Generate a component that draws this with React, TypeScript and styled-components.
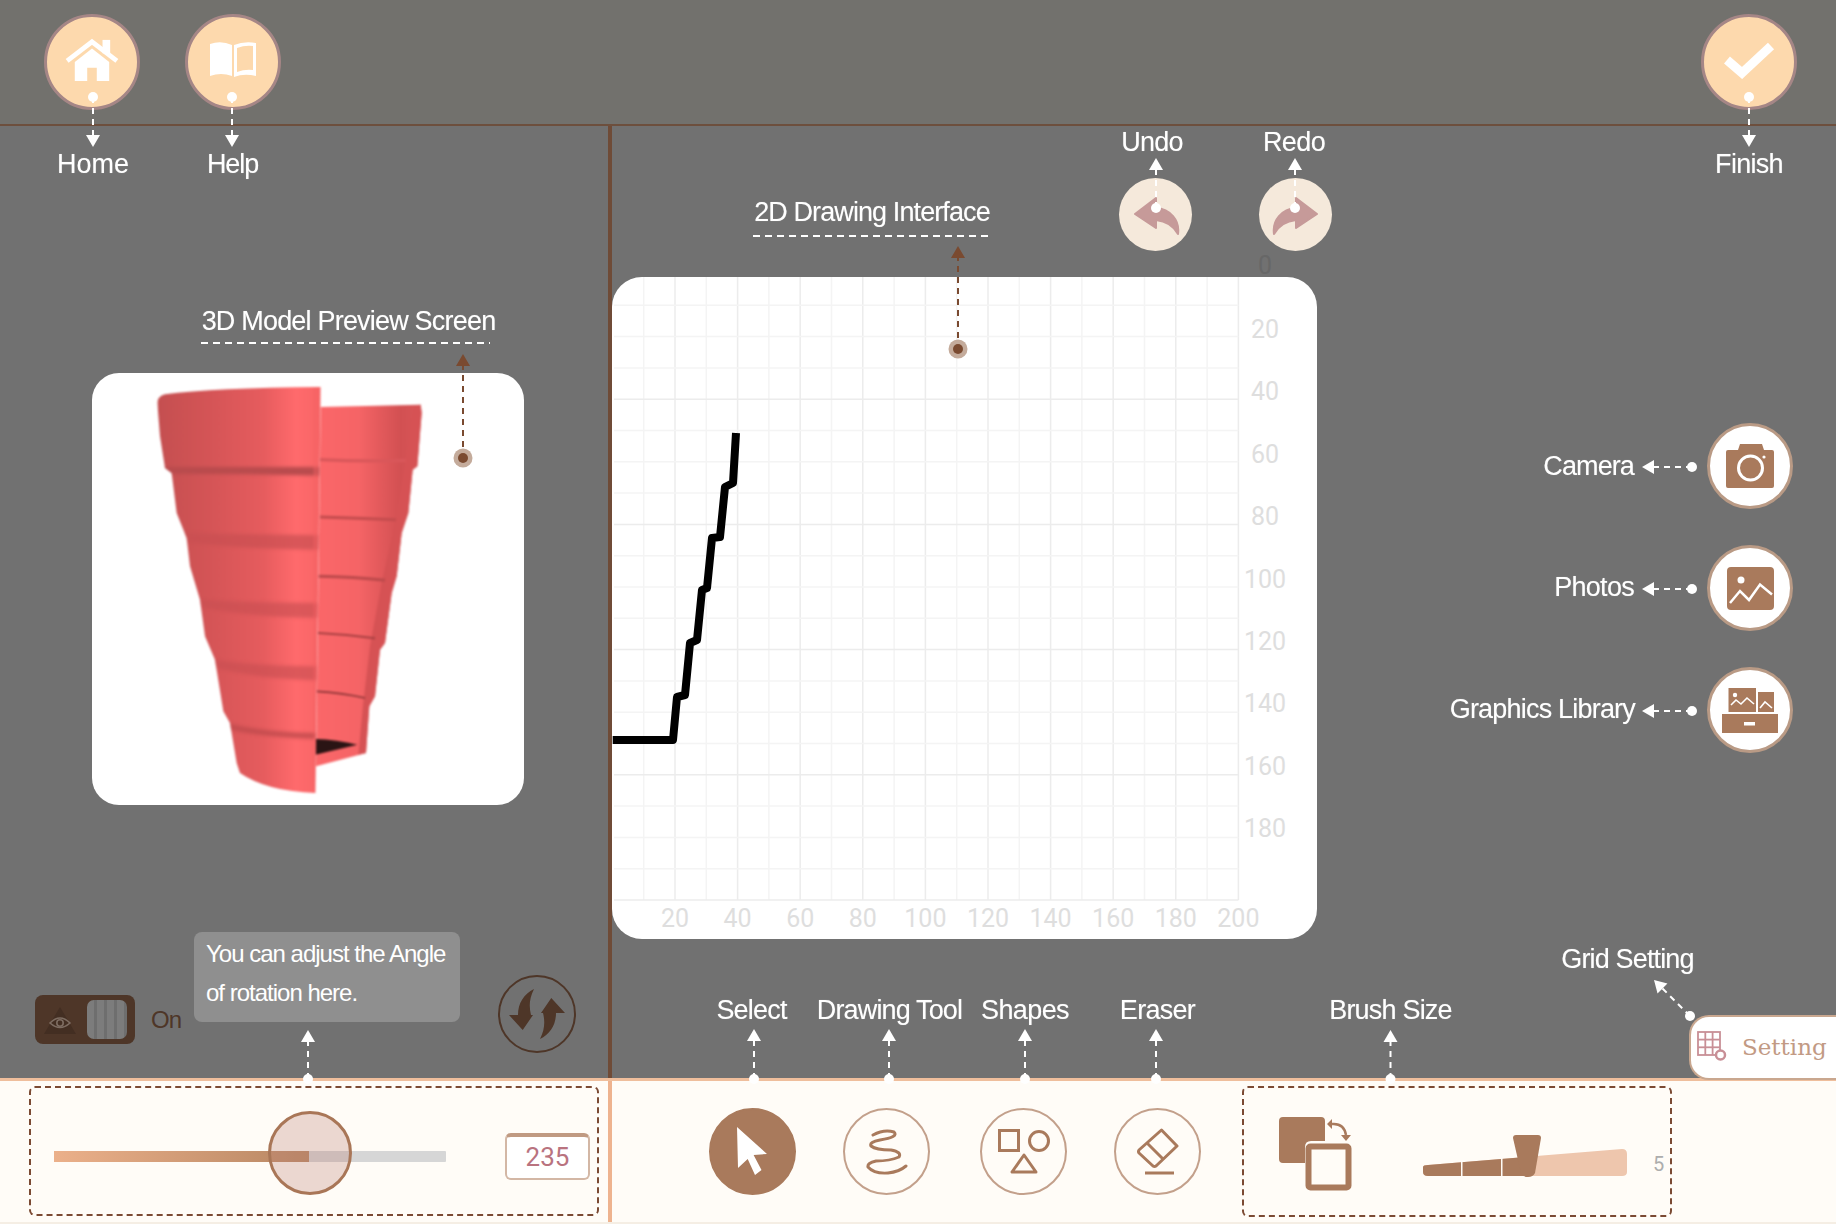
import React from "react";
import styled, { createGlobalStyle } from "styled-components";

const brown = "#a97a5c";
const dark = "#4e3628";
const bubbleIcon = "#c69a99";

const Global = createGlobalStyle`
  html, body { margin: 0; padding: 0; background: #717171; }
  body { width: 1836px; height: 1224px; overflow: hidden; font-family: "Liberation Sans", Arial, sans-serif; }
  * { box-sizing: border-box; }
`;

const Page = styled.div`
  position: relative;
  width: 1836px;
  height: 1224px;
  display: grid;
  grid-template-rows: 126px 952px 146px;
  overflow: hidden;
  background: #717171;
`;

const Header = styled.header`
  display: flex;
  align-items: flex-start;
  padding: 14px 39px 0 44px;
  gap: 45px;
  background: #72716d;
  border-bottom: 2px solid #6d4f3d;
`;

const HeaderButton = styled.div<{ $end?: boolean }>`
  width: 96px;
  height: 96px;
  border-radius: 50%;
  flex: none;
  display: flex;
  align-items: center;
  justify-content: center;
  padding-bottom: 4px;
  background: #fdd9ad;
  border: 3px solid #a58686;
  margin-left: ${(p) => (p.$end ? "auto" : "0")};
`;

const Main = styled.main`
  display: grid;
  grid-template-columns: 608px 4px 1fr;
  min-height: 0;
`;

const Divider = styled.div`
  background: #6f4b37;
`;

const LeftPanel = styled.section`
  display: flex;
  flex-direction: column;
  padding-top: 247px;
`;

const PreviewCard = styled.div`
  width: 432px;
  height: 432px;
  margin-left: 92px;
  border-radius: 27px;
  background: #fff;
  overflow: hidden;
`;

const ModelSvg = styled.svg`
  display: block;
  filter: blur(1px);
`;

const Controls = styled.div`
  margin-top: auto;
  display: flex;
  align-items: flex-end;
  padding: 0 0 25px 35px;
`;

const ToggleGroup = styled.div`
  display: flex;
  align-items: center;
  gap: 16px;
  margin-bottom: 9px;
`;

const Toggle = styled.div`
  width: 100px;
  height: 49px;
  border-radius: 8px;
  background: ${dark};
  display: flex;
  align-items: center;
  justify-content: space-between;
  padding: 0 8px 0 3px;
`;

const ToggleKnob = styled.div`
  width: 40px;
  height: 39px;
  border-radius: 7px;
  background: repeating-linear-gradient(90deg, #7c7c7c 0 7px, #6e6e6e 7px 10px);
`;

const OnText = styled.span`
  font-size: 24px;
  letter-spacing: -1px;
  color: ${dark};
  width: 28px;
`;

const Hint = styled.div`
  width: 266px;
  height: 90px;
  margin: 0 38px 31px 15px;
  padding: 2px 12px 0;
  border-radius: 8px;
  background: #8f8f8f;
  color: #fff;
  font-size: 24px;
  line-height: 39px;
  letter-spacing: -1px;
`;

const RefreshButton = styled.div`
  width: 78px;
  height: 78px;
  border-radius: 50%;
  border: 2px solid ${dark};
  display: flex;
  align-items: center;
  justify-content: center;
  flex: none;
`;

const RightPanel = styled.section`
  display: flex;
  justify-content: space-between;
  min-width: 0;
`;

const CanvasColumn = styled.div`
  width: 705px;
  flex: none;
  display: flex;
  flex-direction: column;
`;

const HistoryRow = styled.div`
  display: flex;
  gap: 67px;
  padding: 52px 0 0 507px;
`;

const HistoryButton = styled.div`
  width: 73px;
  height: 73px;
  flex: none;
  border-radius: 50%;
  background: #f5e9db;
  display: flex;
  align-items: center;
  justify-content: center;
`;

const GraphCard = styled.div`
  width: 705px;
  height: 662px;
  margin-top: 26px;
  border-radius: 30px;
  background: #fff;
`;

const GraphSvg = styled.svg`
  display: block;
  overflow: visible;
`;

const AxisText = styled.text<{ $outside?: boolean }>`
  font-family: Roboto, "Liberation Sans", sans-serif;
  font-size: 25px;
  text-anchor: middle;
  fill: ${(p) => (p.$outside ? "#676767" : "#dedede")};
`;

const SideColumn = styled.div`
  flex: 1;
  display: flex;
  flex-direction: column;
  align-items: flex-end;
  padding-top: 297px;
`;

const MediaList = styled.div`
  display: flex;
  flex-direction: column;
  gap: 36px;
  padding-right: 43px;
`;

const MediaButton = styled.div`
  width: 86px;
  height: 86px;
  border-radius: 50%;
  background: #fff;
  border: 3px solid #b99a85;
  display: flex;
  align-items: center;
  justify-content: center;
`;

const SettingTab = styled.div`
  margin-top: auto;
  margin-bottom: -2px;
  position: relative;
  z-index: 1;
  width: 147px;
  height: 65px;
  display: flex;
  align-items: center;
  gap: 15px;
  padding: 0 0 2px 6px;
  background: #fff;
  border: 2px solid #c9a78f;
  border-right: 0;
  border-radius: 20px 0 0 20px;
`;

const SettingText = styled.span`
  font-family: "DejaVu Serif", "Liberation Serif", serif;
  font-size: 23px;
  color: #c29a84;
`;

const Toolbar = styled.footer`
  display: grid;
  grid-template-columns: 608px 4px 1fr;
  background: #fffcf7;
  border-top: 3px solid #efbe9c;
  border-bottom: 2px solid #f5eee4;
`;

const ToolbarDivider = styled.div`
  background: #eeb38f;
`;

const AngleSection = styled.div`
  padding: 5px 9px 0 29px;
`;

const DashedBox = styled.div`
  height: 130px;
  border: 2px dashed #7b4a33;
  border-radius: 6px;
  display: flex;
  align-items: center;
`;

const AngleBox = styled(DashedBox)`
  padding: 0 7px 0 23px;
  justify-content: space-between;
`;

const Track = styled.div`
  position: relative;
  width: 392px;
  height: 11px;
  margin-top: 11px;
  border-radius: 1px;
  background: #d6d6d6;
`;

const TrackFill = styled.div<{ $ratio: number }>`
  width: ${(p) => p.$ratio * 100}%;
  height: 100%;
  background: linear-gradient(90deg, #ebb08a, #b88763);
`;

const Thumb = styled.div`
  position: absolute;
  top: -40px;
  left: 214px;
  width: 84px;
  height: 84px;
  border-radius: 50%;
  border: 3px solid #a97657;
  background: rgba(190, 130, 120, 0.3);
`;

const ValueBox = styled.div`
  width: 85px;
  height: 47px;
  margin-top: 10px;
  border: 2px solid #d3b7a5;
  border-top: 4px solid #c09a82;
  border-radius: 6px;
  background: #fff;
  display: flex;
  align-items: center;
  justify-content: center;
  font-family: Roboto, sans-serif;
  font-size: 26px;
  color: #b9737f;
`;

const ToolSection = styled.div`
  display: flex;
  align-items: center;
  padding-left: 97px;
`;

const ToolRow = styled.div`
  display: grid;
  grid-template-columns: 134px 137px 134px 87px;
  margin-right: 41px;
`;

const ToolButton = styled.div<{ $active?: boolean }>`
  width: 87px;
  height: 87px;
  border-radius: 50%;
  display: flex;
  align-items: center;
  justify-content: center;
  border: 2px solid ${(p) => (p.$active ? brown : "#c3a08b")};
  background: ${(p) => (p.$active ? brown : "transparent")};
`;

const BrushBox = styled(DashedBox)`
  width: 430px;
  align-self: flex-start;
  margin-top: 5px;
  height: 131px;
  padding-left: 35px;
`;

const SwapIcon = styled.svg`
  margin-top: 5px;
  flex: none;
`;

const BrushSlider = styled.svg`
  margin: 9px 0 0 71px;
  flex: none;
`;

const BrushValue = styled.span`
  margin: 25px 0 0 26px;
  font-family: Roboto, sans-serif;
  font-size: 20px;
  color: #adadad;
`;

const Annotations = styled.div`
  position: absolute;
  inset: 0;
  z-index: 2;
  pointer-events: none;
`;

const LeaderSvg = styled.svg`
  position: absolute;
  inset: 0;
`;

const Callout = styled.span<{ $x: number; $y: number; $right?: boolean; $ls?: number }>`
  position: absolute;
  left: ${(p) => p.$x}px;
  top: ${(p) => p.$y}px;
  transform: translate(${(p) => (p.$right ? "-100%" : "-50%")}, -50%);
  color: #fff;
  font-size: 27px;
  line-height: 30px;
  white-space: nowrap;
  text-shadow: 0 0 1px rgba(255, 255, 255, 0.4);
  letter-spacing: ${(p) => p.$ls ?? -0.8}px;
`;

const Leader = ({ x1, y1, x2, y2, color = "#fff", halo = false }: { x1: number; y1: number; x2: number; y2: number; color?: string; halo?: boolean }) => {
  const len = Math.hypot(x2 - x1, y2 - y1);
  const ux = (x2 - x1) / len;
  const uy = (y2 - y1) / len;
  const bx = x2 - ux * 12;
  const by = y2 - uy * 12;
  const nx = -uy * 7;
  const ny = ux * 7;
  return (
    <g>
      <line x1={x1} y1={y1} x2={bx} y2={by} stroke={color} strokeWidth={2} strokeDasharray="6 5" />
      <polygon points={`${x2},${y2} ${bx + nx},${by + ny} ${bx - nx},${by - ny}`} fill={color} />
      {halo && <circle cx={x1} cy={y1} r={9.5} fill="#c4ab9b" />}
      <circle cx={x1} cy={y1} r={5} fill={color} />
    </g>
  );
};

const HomeIcon = () => (
  <svg width="54" height="44" viewBox="0 0 56 46">
    <rect x="39" y="2" width="8" height="14" fill="#fff" />
    <path d="M2 24 L28 4 L54 24" fill="none" stroke="#fff" strokeWidth="5" />
    <path d="M10 25 L28 11 L46 25 V45 H33 V31 H23 V45 H10 Z" fill="#fff" />
  </svg>
);

const BookIcon = () => (
  <svg width="48" height="38" viewBox="0 0 48 38">
    <path d="M1 3 Q12 -1 23 4 V35 Q12 31 1 35 Z" fill="#fff" />
    <path d="M25 4 Q35 0 47 2 V35 Q35 32 25 36 Z" fill="#fff" />
    <path d="M28 7 Q36 4 44 5 V29 Q36 28 28 31 Z" fill="#fdd9ad" />
  </svg>
);

const CheckIcon = () => (
  <svg width="52" height="38" viewBox="0 0 52 38">
    <path d="M4 19 L19 32 L48 5" fill="none" stroke="#fff" strokeWidth="9" />
  </svg>
);

const CurvedArrow = ({ flip }: { flip?: boolean }) => (
  <svg width="48" height="40" viewBox="0 0 48 40">
    <path
      d="M3 19 L24 3 V13 C38 14 48 25 46 39 C41 30 34 26 24 25 V33 Z"
      fill={bubbleIcon}
      stroke={bubbleIcon}
      strokeWidth="2"
      strokeLinejoin="round"
      transform={flip ? "translate(48 0) scale(-1 1)" : undefined}
    />
  </svg>
);

const CameraIcon = () => (
  <svg width="48" height="44" viewBox="0 0 48 44">
    <path d="M2 6 H12 L14 0 H36 L38 6 H46 Q48 6 48 8 V42 Q48 44 46 44 H2 Q0 44 0 42 V8 Q0 6 2 6 Z" fill={brown} />
    <circle cx="24.5" cy="24" r="12" fill="none" stroke="#fff" strokeWidth="3" />
    <circle cx="38" cy="13" r="1.6" fill="#fff" />
  </svg>
);

const PhotoIcon = () => (
  <svg width="47" height="43" viewBox="0 0 47 43">
    <rect width="47" height="43" rx="4" fill={brown} />
    <circle cx="14" cy="13" r="3.5" fill="#fff" />
    <polyline points="3,36 13,24 22,33 33,17.5 45,27.5" fill="none" stroke="#fff" strokeWidth="2.5" />
  </svg>
);

const LibraryIcon = () => (
  <svg width="56" height="45" viewBox="0 0 56 45">
    <rect x="6.5" width="27.5" height="24" fill={brown} />
    <rect x="36" y="4" width="16" height="20" fill={brown} />
    <rect y="26" width="56" height="19" fill={brown} />
    <rect x="22" y="34" width="11" height="3.5" fill="#fff" />
    <circle cx="13" cy="7" r="2.2" fill="#fff" />
    <polyline points="9,17 14,12 19,16 25,10 32,16" fill="none" stroke="#fff" strokeWidth="1.6" />
    <polyline points="38,20 43,14 50,20" fill="none" stroke="#fff" strokeWidth="1.6" />
  </svg>
);

const Cursor = () => (
  <svg width="31" height="49" viewBox="0 0 31 49">
    <path d="M0 0 L30 27 L16.6 28 L24.5 43 L18 48 L10.7 32 L1 41 Z" fill="#fff" />
  </svg>
);

const Squiggle = () => (
  <svg width="42" height="46" viewBox="0 0 42 46">
    <path d="M7 6 Q18 0 28 3 Q33 8 14 11 Q3 13 5 17 Q10 21 25 21 Q36 23 33 28 Q24 32 10 32 Q1 34 2 38 Q8 45 22 44 Q33 43 40 37" fill="none" stroke={brown} strokeWidth="3" strokeLinecap="round" />
  </svg>
);

const ShapesIcon = () => (
  <svg width="52" height="45" viewBox="0 0 52 45">
    <rect x="1.5" y="1.5" width="19" height="20" fill="none" stroke={brown} strokeWidth="3" />
    <circle cx="41" cy="12" r="9.5" fill="none" stroke={brown} strokeWidth="3" />
    <path d="M26 26 L14 43 H38 Z" fill="none" stroke={brown} strokeWidth="3" strokeLinejoin="round" />
  </svg>
);

const EraserIcon = () => (
  <svg width="42" height="47" viewBox="0 0 42 47">
    <path d="M24.5 2 L40 18 L19 38 Q17.5 39 16 38 L2 25 Q1 23.500 2 22 Z" fill="none" stroke={brown} strokeWidth="3" strokeLinejoin="round" />
    <line x1="10" y1="15" x2="26" y2="31" stroke={brown} strokeWidth="3" />
    <line x1="8" y1="45" x2="37" y2="45" stroke={brown} strokeWidth="3" />
  </svg>
);

const RefreshIcon = () => (
  <svg width="74" height="74" viewBox="2 2 74 74">
    <path d="M24.700 55 L11 40 H20 C20 28 26 19 36 14 C31 24 31 32 33 40 H35 Z" fill={dark} />
    <path d="M24.700 55 L11 40 H20 C20 28 26 19 36 14 C31 24 31 32 33 40 H35 Z" fill={dark} transform="rotate(180 39 39)" />
  </svg>
);

const EyeIcon = () => (
  <svg width="44" height="36" viewBox="0 0 44 36">
    <path d="M22 5 L38 32 H6 Z" fill="#432e22" />
    <path d="M12 21 Q22 11 32 21 Q22 30 12 21 Z" fill="none" stroke="#7d6c61" strokeWidth="1.6" />
    <circle cx="22" cy="21" r="3.200" fill="none" stroke="#7d6c61" strokeWidth="1.6" />
  </svg>
);

const GridIcon = () => (
  <svg width="30" height="31" viewBox="0 0 30 31">
    <g fill="none" stroke="#c88f96" strokeWidth="1.800">
      <rect x="1" y="1" width="22" height="23" />
      <line x1="8.300" y1="1" x2="8.300" y2="24" />
      <line x1="15.600" y1="1" x2="15.600" y2="24" />
      <line x1="1" y1="8.600" x2="23" y2="8.600" />
      <line x1="1" y1="16.300" x2="23" y2="16.300" />
      <circle cx="23.500" cy="24" r="4.500" fill="#fff" strokeWidth="2.500" />
    </g>
  </svg>
);

const Model = () => (
  <ModelSvg width="432" height="432" viewBox="36 10 1296 1296">
    <defs>
      <linearGradient id="mL" gradientUnits="userSpaceOnUse" x1="232" y1="0" x2="722" y2="0">
        <stop offset="0" stopColor="#c44f50" />
        <stop offset="0.35" stopColor="#d65557" />
        <stop offset="0.65" stopColor="#e65c5e" />
        <stop offset="0.85" stopColor="#ff6a6c" />
        <stop offset="1" stopColor="#f76566" />
      </linearGradient>
      <linearGradient id="mR" gradientUnits="userSpaceOnUse" x1="710" y1="0" x2="1025" y2="0">
        <stop offset="0" stopColor="#fb6769" />
        <stop offset="0.4" stopColor="#f56466" />
        <stop offset="0.8" stopColor="#d25052" />
        <stop offset="1" stopColor="#d95658" />
      </linearGradient>
      <clipPath id="mLc">
        <path d="M232 100 Q232 80 255 74 Q400 55 722 52 L706 1270 Q560 1265 480 1210 L470 1180 L450 1060 L430 1025 L405 870 L375 800 L360 690 L330 590 L320 505 L290 430 L275 310 L255 295 L240 200 Z" />
      </clipPath>
      <filter id="soft" x="-10%" y="-10%" width="120%" height="120%">
        <feGaussianBlur stdDeviation="5" />
      </filter>
    </defs>
    <path d="M722 112 L1022 105 L1025 130 L1012 290 L998 300 L985 430 L965 490 L950 620 L935 670 L915 820 L900 840 L885 980 L868 1010 L858 1150 L708 1190 Z" fill="url(#mR)" />
    <path d="M1002 108 L1022 105 L1025 130 L1012 290 L998 300 L985 430 L965 490 L950 620 L935 670 L915 820 L900 840 L885 980 L868 1010 L858 1150 L835 1155 L850 1000 L870 830 L905 640 L945 460 L975 280 Z" fill="#d65254" />
    <g fill="none">
      <path d="M720 270 Q850 276 978 272" stroke="#d9575a" strokeWidth="10" />
      <path d="M720 442 Q830 445 948 450" stroke="#c44c4e" strokeWidth="9" />
      <path d="M716 620 Q820 622 915 632" stroke="#bc494b" strokeWidth="9" />
      <path d="M714 790 Q800 794 885 806" stroke="#a84042" strokeWidth="6" />
      <path d="M710 965 Q790 970 855 985" stroke="#8d3537" strokeWidth="5" />
    </g>
    <path d="M706 1108 Q770 1110 832 1125 L706 1155 Z" fill="#2a1414" />
    <g clipPath="url(#mLc)">
      <rect x="200" y="40" width="540" height="1240" fill="url(#mL)" />
      <g filter="url(#soft)">
        <path d="M250 292 L730 292 V318 Q500 312 270 312 Z" fill="#b84b4d" />
        <path d="M310 490 Q500 494 730 497 V540 Q500 540 325 518 Z" fill="#c94f51" opacity="0.7" />
        <path d="M360 690 Q520 700 730 700 V745 Q520 745 365 712 Z" fill="#c94f51" opacity="0.65" />
        <path d="M400 870 Q540 890 730 890 V932 Q540 930 410 895 Z" fill="#c94f51" opacity="0.65" />
        <path d="M440 1060 Q560 1090 730 1090 V1108 Q560 1105 450 1080 Z" fill="#bf4a4c" opacity="0.8" />
      </g>
      <rect x="700" y="40" width="30" height="1240" fill="#f46163" opacity="0.4" />
    </g>
  </ModelSvg>
);

const xTicks = Array.from({ length: 21 }, (_, i) => 612.4 + i * 31.3);
const yTicks = Array.from({ length: 21 }, (_, i) => 274 + i * 31.3);
const labels = Array.from({ length: 10 }, (_, i) => (i + 1) * 20);

const Graph = () => (
  <GraphSvg width="705" height="662" viewBox="612 277 705 662">
    <g strokeWidth="1.5">
      {xTicks.slice(1).map((x, i) => (
        <line key={x} x1={x} y1="277" x2={x} y2="900" stroke={i % 2 === 1 ? "#ececec" : "#f4f4f4"} />
      ))}
      {yTicks.slice(1).map((y, i) => (
        <line key={y} x1="614" y1={y} x2="1238.4" y2={y} stroke={i % 4 === 3 ? "#ececec" : "#f4f4f4"} />
      ))}
    </g>
    <polyline
      points="612.700,740 673,740 677,697 685,695 690,643 697,640 702,590 707,588 712,538 720,537 725,487 733,483 736,433"
      fill="none"
      stroke="#000"
      strokeWidth="8"
      strokeLinejoin="round"
      strokeLinecap="butt"
    />
    <AxisText $outside x="1265" y="274">0</AxisText>
    {labels.slice(0, 9).map((v, i) => (
      <AxisText key={v} x="1265" y={338 + i * 62.4}>{v}</AxisText>
    ))}
    {labels.map((v) => (
      <AxisText key={v} x={612.4 + v * 3.13} y="927">{v}</AxisText>
    ))}
  </GraphSvg>
);

export default function App() {
  return (
    <Page>
      <Global />
      <Header>
        <HeaderButton><HomeIcon /></HeaderButton>
        <HeaderButton><BookIcon /></HeaderButton>
        <HeaderButton $end><CheckIcon /></HeaderButton>
      </Header>
      <Main>
        <LeftPanel>
          <PreviewCard><Model /></PreviewCard>
          <Controls>
            <ToggleGroup>
              <Toggle><EyeIcon /><ToggleKnob /></Toggle>
              <OnText>On</OnText>
            </ToggleGroup>
            <Hint>You can adjust the Angle<br />of rotation here.</Hint>
            <RefreshButton><RefreshIcon /></RefreshButton>
          </Controls>
        </LeftPanel>
        <Divider />
        <RightPanel>
          <CanvasColumn>
            <HistoryRow>
              <HistoryButton><CurvedArrow /></HistoryButton>
              <HistoryButton><CurvedArrow flip /></HistoryButton>
            </HistoryRow>
            <GraphCard><Graph /></GraphCard>
          </CanvasColumn>
          <SideColumn>
            <MediaList>
              <MediaButton><CameraIcon /></MediaButton>
              <MediaButton><PhotoIcon /></MediaButton>
              <MediaButton><LibraryIcon /></MediaButton>
            </MediaList>
            <SettingTab>
              <GridIcon />
              <SettingText>Setting</SettingText>
            </SettingTab>
          </SideColumn>
        </RightPanel>
      </Main>
      <Toolbar>
        <AngleSection>
          <AngleBox>
            <Track>
              <TrackFill $ratio={0.65} />
              <Thumb />
            </Track>
            <ValueBox>235</ValueBox>
          </AngleBox>
        </AngleSection>
        <ToolbarDivider />
        <ToolSection>
          <ToolRow>
            <ToolButton $active><Cursor /></ToolButton>
            <ToolButton><Squiggle /></ToolButton>
            <ToolButton><ShapesIcon /></ToolButton>
            <ToolButton><EraserIcon /></ToolButton>
          </ToolRow>
          <BrushBox>
            <SwapIcon width="73" height="74" viewBox="0 0 73 74">
              <path d="M4 0 H42 Q46 0 46 4 V24 H32 Q26 24 26 30 V46 H4 Q0 46 0 42 V4 Q0 0 4 0 Z" fill={brown} />
              <rect x="29.500" y="29.500" width="40" height="41" rx="2" fill="#fffcf7" stroke={brown} strokeWidth="6" />
              <path d="M53 7 Q65 6 67 18" fill="none" stroke={brown} strokeWidth="2.500" />
              <path d="M53 2 V12 L48 7 Z M62 18 H72 L67 24 Z" fill={brown} />
            </SwapIcon>
            <BrushSlider width="204" height="42" viewBox="0 0 204 42">
              <path d="M5 41 Q0 41 0 37 V32 Q0 30 5 30 L199 14 Q204 14 204 19 V37 Q204 41 199 41 Z" fill="#eec6ad" />
              <path d="M5 41 Q0 41 0 37 V32 Q0 30 5 30 L102 22 V41 Z" fill={brown} />
              <rect x="38" y="20" width="1.500" height="22" fill="#fffcf7" />
              <rect x="78" y="20" width="1.500" height="22" fill="#fffcf7" />
              <path d="M93 0 H115 Q118 0 118 3 L112 38 Q110 42 105 42 Q100 42 98 38 L90 3 Q90 0 93 0 Z" fill={brown} />
            </BrushSlider>
            <BrushValue>5</BrushValue>
          </BrushBox>
        </ToolSection>
      </Toolbar>
      <Annotations>
        <LeaderSvg width="1836" height="1224" viewBox="0 0 1836 1224">
          <Leader x1={93} y1={97} x2={93} y2={147} />
          <Leader x1={232} y1={97} x2={232} y2={147} />
          <Leader x1={1749} y1={97} x2={1749} y2={147} />
          <Leader x1={1156} y1={208} x2={1156} y2={158} />
          <Leader x1={1295} y1={208} x2={1295} y2={158} />
          <Leader x1={1692} y1={467} x2={1642} y2={467} />
          <Leader x1={1692} y1={589} x2={1642} y2={589} />
          <Leader x1={1692} y1={711} x2={1642} y2={711} />
          <Leader x1={308} y1={1079} x2={308} y2={1030} />
          <Leader x1={754} y1={1079} x2={754} y2={1029} />
          <Leader x1={889} y1={1079} x2={889} y2={1029} />
          <Leader x1={1025} y1={1079} x2={1025} y2={1029} />
          <Leader x1={1156} y1={1079} x2={1156} y2={1029} />
          <Leader x1={1390.5} y1={1079} x2={1390.5} y2={1030} />
          <Leader x1={1690} y1={1016} x2={1654} y2={980} />
          <Leader x1={463} y1={458} x2={463} y2={354} color="#7a4a30" halo />
          <Leader x1={958} y1={349} x2={958} y2={246} color="#7a4a30" halo />
          <line x1={201} y1={343} x2={490} y2={343} stroke="#fff" strokeWidth={2} strokeDasharray="7 5" />
          <line x1={753} y1={236} x2={989} y2={236} stroke="#fff" strokeWidth={2} strokeDasharray="7 5" />
        </LeaderSvg>
        <Callout $x={93} $y={164} $ls={0}>Home</Callout>
        <Callout $x={232.5} $y={164} $ls={-1.1}>Help</Callout>
        <Callout $x={1749} $y={164} $ls={-0.7}>Finish</Callout>
        <Callout $x={1152} $y={142}>Undo</Callout>
        <Callout $x={1294} $y={142} $ls={-0.6}>Redo</Callout>
        <Callout $x={348.5} $y={321}>3D Model Preview Screen</Callout>
        <Callout $x={872} $y={212} $ls={-0.9}>2D Drawing Interface</Callout>
        <Callout $x={1634} $y={466} $right $ls={-0.9}>Camera</Callout>
        <Callout $x={1634} $y={587} $right $ls={-0.7}>Photos</Callout>
        <Callout $x={1635} $y={709} $right>Graphics Library</Callout>
        <Callout $x={751.5} $y={1010}>Select</Callout>
        <Callout $x={889.5} $y={1010} $ls={-0.85}>Drawing Tool</Callout>
        <Callout $x={1025} $y={1010} $ls={-0.6}>Shapes</Callout>
        <Callout $x={1157.5} $y={1010} $ls={-0.7}>Eraser</Callout>
        <Callout $x={1390.5} $y={1010}>Brush Size</Callout>
        <Callout $x={1627.5} $y={959} $ls={-0.85}>Grid Setting</Callout>
      </Annotations>
    </Page>
  );
}
